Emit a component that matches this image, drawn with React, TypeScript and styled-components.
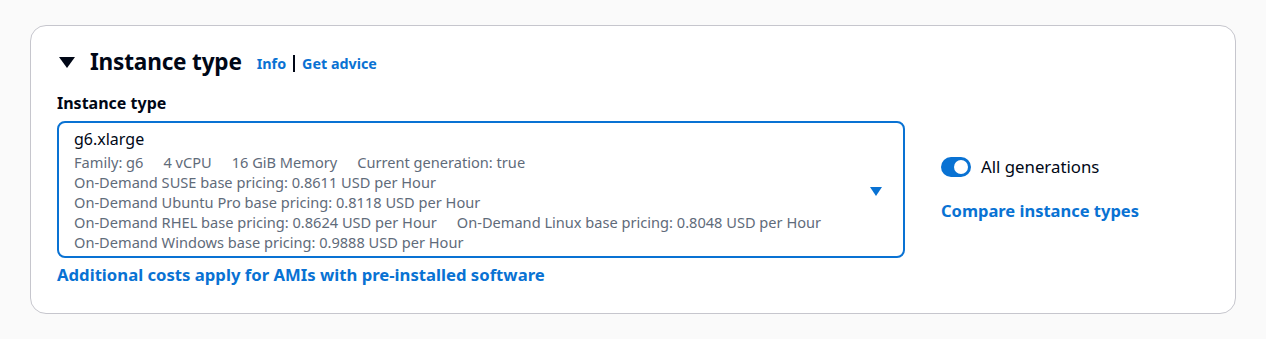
import styled, { createGlobalStyle } from "styled-components";

const GlobalStyle = createGlobalStyle`
  body {
    margin: 0;
    background: #fafafa;
    font-family: "Noto Sans", "Open Sans", Arial, sans-serif;
    color: #000716;
  }
`;

const Page = styled.div`
  padding: 25px 30px 25px 30px;
  height: 339px;
  box-sizing: border-box;
`;

const Card = styled.section`
  background: #fff;
  border: 1px solid #c6c6cd;
  border-radius: 16px;
  height: 289px;
  box-sizing: border-box;
  padding: 19px 26px 0 26px;
`;

const Header = styled.div`
  display: flex;
  align-items: center;
  height: 32px;
`;

const Caret = styled.span`
  width: 0;
  height: 0;
  border-left: 8px solid transparent;
  border-right: 8px solid transparent;
  border-top: 11px solid #000716;
  margin: 2px 15px 0 2px;
`;

const Title = styled.h2`
  margin: 0;
  font-size: 22.6px;
  font-weight: 700;
  letter-spacing: -0.2px;
`;

const HeaderLinks = styled.div`
  display: flex;
  align-items: center;
  margin-left: 15px;
  margin-top: 5px;
  font-size: 14.3px;
  font-weight: 700;
  color: #0972d3;
`;

const Divider = styled.span`
  width: 2px;
  height: 17px;
  background: #000716;
  margin: 0 7px 0 7px;
`;

const Body = styled.div`
  display: flex;
  align-items: flex-start;
  margin-top: 16px;
`;

const Field = styled.div`
  width: 848px;
`;

const Label = styled.div`
  font-size: 16px;
  font-weight: 700;
  line-height: 20px;
  margin-bottom: 8px;
`;

const Select = styled.div`
  border: 2px solid #0972d3;
  border-radius: 8px;
  padding: 3px 14px 5px 15px;
  height: 137px;
  box-sizing: border-box;
  display: flex;
  align-items: center;
`;

const Options = styled.div`
  flex: 1;
`;

const Value = styled.div`
  font-size: 16px;
  line-height: 26px;
  color: #000716;
`;

const Line = styled.div`
  font-size: 14.6px;
  line-height: 20px;
  color: #5f6b7a;
  display: flex;
  gap: 20px;
`;

const DropArrow = styled.span`
  width: 0;
  height: 0;
  border-left: 6px solid transparent;
  border-right: 6px solid transparent;
  border-top: 9px solid #0972d3;
  margin-right: 7px;
  margin-top: 6px;
`;

const BottomLink = styled.div`
  margin-top: 6px;
  font-size: 16.7px;
  line-height: 22px;
  font-weight: 700;
  color: #0972d3;
`;

const Side = styled.div`
  margin-left: 36px;
  padding-top: 62px;
  display: flex;
  flex-direction: column;
  gap: 20px;
`;

const ToggleRow = styled.div`
  display: flex;
  align-items: center;
  gap: 10px;
  font-size: 16.8px;
  line-height: 24px;
`;

const Toggle = styled.span`
  width: 30px;
  height: 20px;
  border-radius: 10px;
  background: #0972d3;
  position: relative;
  &::after {
    content: "";
    position: absolute;
    right: 3px;
    top: 3px;
    width: 14px;
    height: 14px;
    border-radius: 50%;
    background: #fff;
  }
`;

const SideLink = styled.div`
  font-size: 16.5px;
  line-height: 23px;
  font-weight: 700;
  color: #0972d3;
`;

export default function App() {
  return (
    <>
      <GlobalStyle />
      <Page>
        <Card>
          <Header>
            <Caret />
            <Title>Instance type</Title>
            <HeaderLinks>
              <span>Info</span>
              <Divider />
              <span>Get advice</span>
            </HeaderLinks>
          </Header>
          <Body>
            <Field>
              <Label>Instance type</Label>
              <Select>
                <Options>
                  <Value>g6.xlarge</Value>
                  <Line>
                    <span>Family: g6</span>
                    <span>4 vCPU</span>
                    <span>16 GiB Memory</span>
                    <span>Current generation: true</span>
                  </Line>
                  <Line>On-Demand SUSE base pricing: 0.8611 USD per Hour</Line>
                  <Line>On-Demand Ubuntu Pro base pricing: 0.8118 USD per Hour</Line>
                  <Line>
                    <span>On-Demand RHEL base pricing: 0.8624 USD per Hour</span>
                    <span>On-Demand Linux base pricing: 0.8048 USD per Hour</span>
                  </Line>
                  <Line>On-Demand Windows base pricing: 0.9888 USD per Hour</Line>
                </Options>
                <DropArrow />
              </Select>
              <BottomLink>Additional costs apply for AMIs with pre-installed software</BottomLink>
            </Field>
            <Side>
              <ToggleRow>
                <Toggle />
                All generations
              </ToggleRow>
              <SideLink>Compare instance types</SideLink>
            </Side>
          </Body>
        </Card>
      </Page>
    </>
  );
}
